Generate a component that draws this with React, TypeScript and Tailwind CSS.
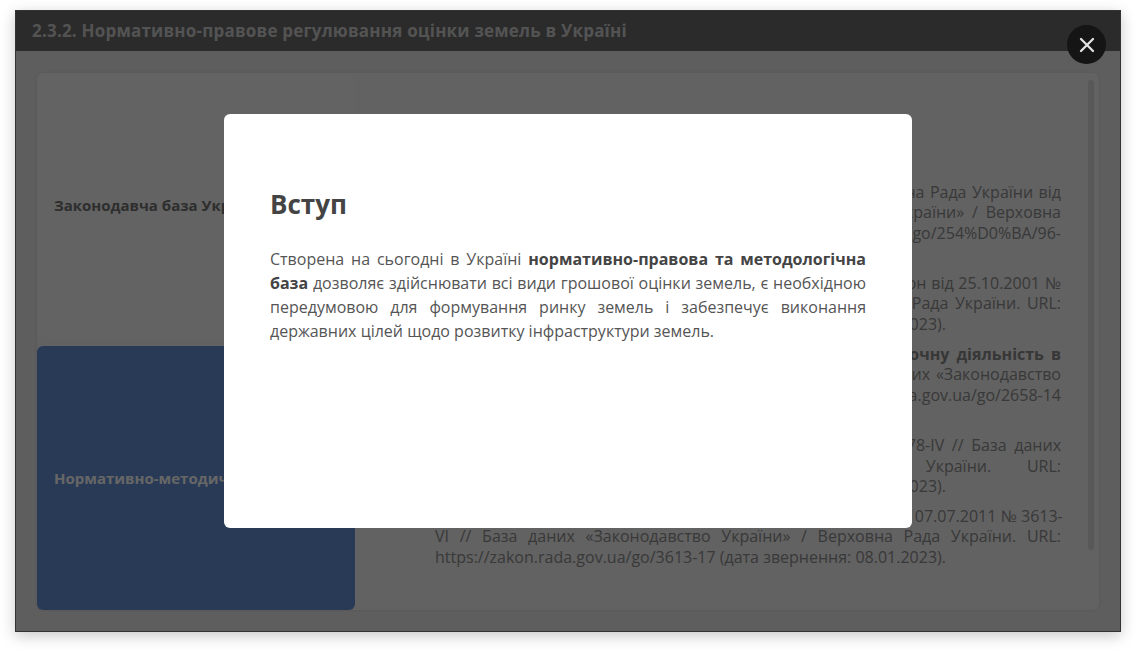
import React from 'react';

type Line = { text: React.ReactNode; last?: boolean };

// список джерел, розбитий на рядки як у оригіналі
const sources: Line[][] = [
    [
        { text: 'Конституція України: Закон України від 28.06.1996 / Верховна Рада України від' },
        { text: '28.06.1996 № 254к/96-ВР // База даних «Законодавство України» / Верховна' },
        { text: 'Рада України. URL: https://zakon.rada.gov.ua/go/254%D0%BA/96-' },
        { text: 'вр (дата звернення: 08.01.2023).', last: true },
    ],
    [
        { text: 'Земельний кодекс України : Кодекс України : ухвалений Закон від 25.10.2001 №' },
        { text: '2768-III // База даних «Законодавство України» / Верховна Рада України. URL:' },
        { text: 'https://zakon.rada.gov.ua/go/2768-14 (дата звернення: 08.01.2023).', last: true },
    ],
    [
        { text: <b className="text-[#8a8a8a]">Про оцінку майна, майнових прав та професійну оціночну діяльність в</b> },
        { text: <><b className="text-[#8a8a8a]">Україні</b>: Закон України від 12.07.2001 № 2658-III // База даних «Законодавство</> },
        { text: 'України» / Верховна Рада України. URL: https://zakon.rada.gov.ua/go/2658-14' },
        { text: '(дата звернення: 08.01.2023).', last: true },
    ],
    [
        { text: 'Про оцінку земель : Закон України : від 11.12.2003 № 1378-IV // База даних' },
        { text: '«Законодавство України» / Верховна Рада України. URL:' },
        { text: 'https://zakon.rada.gov.ua/go/1378-15 (дата звернення: 08.01.2023).', last: true },
    ],
    [
        { text: 'Про Державний земельний кадастр : Закон України : ред. від 07.07.2011 № 3613-' },
        { text: 'VI // База даних «Законодавство України» / Верховна Рада України. URL:' },
        { text: 'https://zakon.rada.gov.ua/go/3613-17 (дата звернення: 08.01.2023).', last: true },
    ],
];

export default function App() {
    return (
        <div className="w-[1136px] h-[653px] bg-white pl-[15px] pt-[10px] font-['Open_Sans',sans-serif]">
            <div className="relative w-[1106px] h-[622px] border border-[#333] bg-[#ebebeb] shadow-[0_4px_14px_rgba(0,0,0,0.22)] flex flex-col">
                {/* header */}
                <div className="h-[40px] shrink-0 bg-[#6b6b6b] flex items-center px-[16px]">
                    <h1 className="text-[17px] font-bold text-[#d0d0d0] tracking-[0.2px]">
                        2.3.2. Нормативно-правове регулювання оцінки земель в Україні
                    </h1>
                </div>

                {/* body */}
                <div className="flex-1 min-h-0 px-[21px] pt-[22px] pb-[21px]">
                    <div className="flex h-full rounded-md bg-[#f5f5f5] shadow-[0_0_3px_rgba(0,0,0,0.12)]">
                        <div className="w-[318px] shrink-0 flex flex-col gap-2">
                            <div className="flex-1 flex items-center px-[17px] rounded-md bg-[#f7f7f7]">
                                <span className="text-[15px] font-bold text-[#737373]">Законодавча база України</span>
                            </div>
                            <div className="flex-1 flex items-center px-[17px] rounded-md bg-[#6491d8]">
                                <span className="text-[15px] font-bold text-white">Нормативно-методична база</span>
                            </div>
                        </div>

                        <div className="flex-1 min-w-0 flex pl-[80px] pr-[5px]">
                            <div className="flex-1 min-w-0 pt-[109px] flex flex-col gap-[10px] text-[16px] leading-[20.3px] text-[#8e8e8e]">
                                {sources.map((item, i) => (
                                    <div key={i}>
                                        {item.map((line, j) => (
                                            <div
                                                key={j}
                                                className={
                                                    line.last
                                                        ? 'text-left whitespace-nowrap'
                                                        : 'text-justify [text-align-last:justify] whitespace-nowrap'
                                                }
                                            >
                                                {line.text}
                                            </div>
                                        ))}
                                    </div>
                                ))}
                            </div>
                            <div className="w-[6px] shrink-0 h-[470px] mt-[7px] ml-[27px] rounded-full bg-[#dcdcdc]" />
                        </div>
                    </div>
                </div>

                {/* backdrop + modal */}
                <div className="absolute inset-0 bg-black/60 flex items-center justify-center">
                    <div className="w-[688px] h-[414px] rounded-md bg-white pt-[75px] px-[46px]">
                        <h2 className="text-[26px] leading-[31px] font-bold text-[#444]">Вступ</h2>
                        <p className="mt-[27px] text-[16px] leading-[24px] text-[#555] text-justify">
                            Створена на сьогодні в Україні{' '}
                            <b className="text-[#444]">нормативно-правова та методологічна база</b> дозволяє
                            здійснювати всі види грошової оцінки земель, є необхідною передумовою для
                            формування ринку земель і забезпечує виконання державних цілей щодо розвитку
                            інфраструктури земель.
                        </p>
                    </div>
                </div>

                <button className="absolute top-[14px] right-[14px] w-[39px] h-[39px] rounded-full bg-[#151515] flex items-center justify-center">
                    <svg width="16" height="16" viewBox="0 0 16 16">
                        <path d="M2 2 L14 14 M14 2 L2 14" stroke="#e2e2e2" strokeWidth="2.3" strokeLinecap="round" />
                    </svg>
                </button>
            </div>
        </div>
    );
}
